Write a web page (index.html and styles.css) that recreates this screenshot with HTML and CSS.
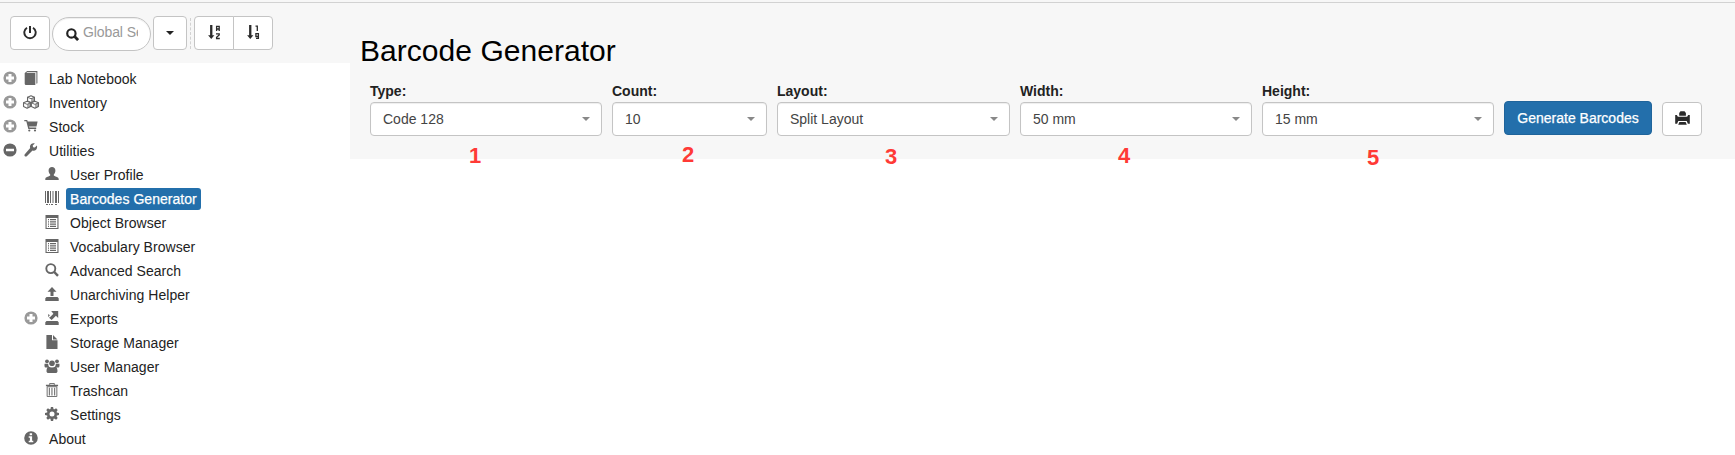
FILE: index.html
```html
<!DOCTYPE html>
<html lang="en">
<head>
<meta charset="utf-8">
<title>Barcode Generator</title>
<link rel="stylesheet" href="styles.css">
</head>
<body>
<svg class="sprite" aria-hidden="true">
  <symbol id="plus" viewBox="0 0 14 14"><path fill-rule="evenodd" d="M7 .4a6.6 6.6 0 1 0 0 13.2A6.6 6.6 0 0 0 7 .4zM5.500 3h3v2.500H11v3H8.500V11H5.500V8.500H3V5.500h2.500z"/></symbol>
  <symbol id="minus" viewBox="0 0 14 14"><path fill-rule="evenodd" d="M7 .4a6.6 6.6 0 1 0 0 13.2A6.6 6.6 0 0 0 7 .4zM3 5.700h8v2.600H3z"/></symbol>
  <symbol id="book" viewBox="0 0 14 14"><path d="M3.200 0H13.400V12.300l-1 .5V1.300H3.200L2.300 2H11.300V14H2a1.300 1.300 0 0 1-1.300-1.300V2z"/></symbol>
  <symbol id="cubes" viewBox="0 0 18 15"><g fill="#fff" stroke="#666" stroke-width="1.200" stroke-linejoin="round"><path d="M9 .8l3.700 1.600v4L9 8 5.300 6.400v-4z"/><path d="M4.800 6.800l3.800 1.600v4l-3.800 1.800L1 12.400v-4z"/><path d="M13.200 6.800L17 8.400v4l-3.800 1.800-3.800-1.800v-4z"/></g><path d="M9 4l3.700-1.600v4L9 8zM4.800 10l3.800-1.600v4l-3.800 1.800zM13.200 10L17 8.400v4l-3.800 1.800z" opacity=".55"/><path d="M5.300 2.400L9 4l3.700-1.600M1 8.400L4.800 10l3.800-1.600M9.400 8.400l3.800 1.600L17 8.400" fill="none" stroke="#666"/></symbol>
  <symbol id="cart" viewBox="0 0 14 14"><path d="M.3 1h2.900l.5 1.600h9.900L12.500 7.400H5.100l.3 1.200h6.800V10H4.300L2.300 2.300H.3z"/><circle cx="5.300" cy="11.500" r="1.100"/><circle cx="11" cy="11.500" r="1.100"/></symbol>
  <symbol id="wrench" viewBox="0 0 14 14"><path d="M12.900 2.600l-2.100 2-1.700-.3-.4-1.700L10.800.5C8.800-.3 6.300 1 6 3.200c-.1.700 0 1.200.2 1.800L.8 11.300c-1.200 1.500.7 3.100 2 1.900L8.500 7.500c2.800 1 5.400-1.800 4.400-4.900z"/></symbol>
  <symbol id="user" viewBox="0 0 14 14"><path d="M7 0c2 0 3.400 1.300 3.400 3.400 0 1.600-.7 3.300-1.600 4.100v1.100c.5.700 4.900 1.500 4.900 3.300V13H.3v-1.100c0-1.800 4.400-2.600 4.900-3.300V7.500C4.300 6.700 3.600 5 3.600 3.400 3.600 1.300 5 0 7 0z"/></symbol>
  <symbol id="barcode" viewBox="0 0 14 14"><path d="M0 0h1v12H0zM2 0h2v12H2zM5 0h1v12H5zM7.500 0h1v12h-1zM10 0h2v12h-2zM13 0h1v12h-1zM1 13h2v1H1zM4 13h1v1H4zM6 13h2v1H6zM10 13h2v1h-2z"/></symbol>
  <symbol id="list" viewBox="0 0 14 14"><path fill-rule="evenodd" d="M.5 0h13v14H.5zM1.600 3v9.900h10.800V3z"/><path d="M3 4h1v1.200H3zM5 4h6v1.200H5zM3 6.300h1v1.200H3zM5 6.300h6v1.200H5zM3 8.500h1v1.200H3zM5 8.500h6v1.200H5zM3 10.700h1v1.200H3zM5 10.700h6v1.200H5z"/></symbol>
  <symbol id="search" viewBox="0 0 14 14"><g fill="none" stroke="currentColor"><circle cx="5.800" cy="5.600" r="4.500" stroke-width="1.900"/><path d="M9.200 9l3.800 3.900" stroke-width="2.500"/></g></symbol>
  <symbol id="search-bold" viewBox="0 0 14 14"><g fill="none" stroke="currentColor"><circle cx="5.800" cy="5.800" r="4.500" stroke-width="2.300"/><path d="M9 9l4 4" stroke-width="3"/></g></symbol>
  <symbol id="upload" viewBox="0 0 14 14"><path d="M7 0l4.500 4.700H8.500V9h-3V4.700h-3zM1.500 10h11l1.200 1.300V14H.3v-2.700z"/></symbol>
  <symbol id="export" viewBox="0 0 14 14"><path d="M6.200 0h7v7l-2.300-2.300L8 7.700 6.600 9 4 6.700l1.700-1.100 2.700-2.800zM1.500 10h11l1.200 1.300V14H.3v-2.700zM3.300 3l1.600 1.300-1.800 1.900z"/></symbol>
  <symbol id="file" viewBox="0 0 14 14"><path d="M1.400 0H7v5.300h5.500V14H1.400zM8 0l4.500 4.400H8z"/></symbol>
  <symbol id="users" viewBox="0 0 16 14"><circle cx="3" cy="2.300" r="1.900"/><circle cx="13" cy="2.300" r="1.900"/><circle cx="8" cy="4.300" r="2.800"/><path d="M.6 4.700h3.600A4.500 4.500 0 0 0 5 7.600L3 8.500H1.500C.5 8.500.3 6 .6 4.700zM11.800 4.700h3.600c.3 1.300.1 3.800-.9 3.800H13l-2-.9c.6-.8.9-1.700.8-2.900zM4.500 7.500c2 1.200 5 1.200 7 0 1.500.6 2 3 2 4.700 0 1.200-.8 1.800-1.900 1.800H4.400c-1.100 0-1.900-.6-1.900-1.800 0-1.700.5-4.100 2-4.700z"/></symbol>
  <symbol id="trash" viewBox="0 0 14 15"><path d="M4.500 2V.5h5V2M1.800 4h10.400v10.500H1.800z" fill="none" stroke="currentColor"/><path d="M.5 2h13v1.500H.5zM3.600 5h1.100v8.500H3.600zM6.400 5h1.100v8.500H6.400zM9.300 5h1.100v8.500H9.300z"/></symbol>
  <symbol id="gear" viewBox="0 0 14 14"><circle cx="7" cy="7" r="3.700" fill="none" stroke="currentColor" stroke-width="2.400"/><path d="M5.900 0h2.200l.6 3H5.300zM5.300 11h3.400l-.6 3H5.900zM0 5.900l3-.6v3.400l-3-.6zM11 5.300l3 .6v2.200l-3 .6zM1.300 2.900l1.600-1.600 2.300 1.500-2.400 2.400zM8.800 2.800l2.300-1.500 1.600 1.600-1.500 2.300zM2.800 8.800l2.400 2.400-2.300 1.500-1.600-1.600zM11.200 8.800l1.500 2.300-1.600 1.600-2.300-1.500z"/></symbol>
  <symbol id="info" viewBox="0 0 14 14"><path fill-rule="evenodd" d="M7 .2a6.800 6.800 0 1 0 0 13.600A6.800 6.800 0 0 0 7 .2zM5.700 2.300h2.400v1.900H5.700zM4.700 5.300h3.400v4.400h1.200v1.500H4.700V9.700h1.200V6.800H4.700z"/></symbol>
  <symbol id="power" viewBox="0 0 14 14"><path d="M4 1.700a5.700 5.700 0 1 0 6 0" fill="none" stroke="currentColor" stroke-width="1.900"/><path d="M6 0h2v7H6z"/></symbol>
  <symbol id="sort-alpha" viewBox="0 0 13 15"><path d="M2.100 0h2.300v10.300h2L3.250 14 .1 10.300h2z"/><g fill="none" stroke="currentColor" stroke-width="1.300"><path d="M8.600 6V1.300h2.600V6M8.600 4h2.600M8 8.900h3.200v1L8.600 12.300v1.200h3.200"/></g></symbol>
  <symbol id="sort-order" viewBox="0 0 13 15"><path d="M2.100 0h2.300v10.300h2L3.250 14 .1 10.300h2z"/><g fill="none" stroke="currentColor" stroke-width="1.300"><path d="M8.500 1.100h1.800V6M11.400 11.500H8.900V8.700h2.500v4.700H9"/></g></symbol>
  <symbol id="print" viewBox="0 0 15 14"><path d="M4.200 4.700V2L5.500.3h4L10.900 2v2.700zM.2 4h1.600l1.100 1.700h9.200L13.200 4h1.600v8.700h-1.900l-1.200-2.800H3.300l-1.200 2.800H.2zM4.400 11h6.200l1.200 2.700H3.200z"/></symbol>
</svg>

<header class="topline"></header>
<div class="app">
  <aside class="sidebar">
    <div class="toolbar">
      <button class="btn power"><svg><use href="#power"/></svg></button>
      <div class="search"><svg><use href="#search-bold"/></svg><span>Global Search</span></div>
      <button class="btn dropdown"><i class="caret"></i></button>
      <i class="separator"></i>
      <div class="group">
        <button class="btn"><svg><use href="#sort-alpha"/></svg></button>
        <button class="btn"><svg><use href="#sort-order"/></svg></button>
      </div>
    </div>
    <ul class="tree">
      <li><svg class="toggle"><use href="#plus"/></svg><svg class="icon"><use href="#book"/></svg><span>Lab Notebook</span></li>
      <li><svg class="toggle"><use href="#plus"/></svg><svg class="icon wide"><use href="#cubes"/></svg><span>Inventory</span></li>
      <li><svg class="toggle"><use href="#plus"/></svg><svg class="icon"><use href="#cart"/></svg><span>Stock</span></li>
      <li><svg class="toggle open"><use href="#minus"/></svg><svg class="icon"><use href="#wrench"/></svg><span>Utilities</span></li>
      <li class="child"><i class="toggle"></i><svg class="icon"><use href="#user"/></svg><span>User Profile</span></li>
      <li class="child"><i class="toggle"></i><svg class="icon"><use href="#barcode"/></svg><span class="active">Barcodes Generator</span></li>
      <li class="child"><i class="toggle"></i><svg class="icon"><use href="#list"/></svg><span>Object Browser</span></li>
      <li class="child"><i class="toggle"></i><svg class="icon"><use href="#list"/></svg><span>Vocabulary Browser</span></li>
      <li class="child"><i class="toggle"></i><svg class="icon"><use href="#search"/></svg><span>Advanced Search</span></li>
      <li class="child"><i class="toggle"></i><svg class="icon"><use href="#upload"/></svg><span>Unarchiving Helper</span></li>
      <li class="child"><svg class="toggle"><use href="#plus"/></svg><svg class="icon"><use href="#export"/></svg><span>Exports</span></li>
      <li class="child"><i class="toggle"></i><svg class="icon"><use href="#file"/></svg><span>Storage Manager</span></li>
      <li class="child"><i class="toggle"></i><svg class="icon wide"><use href="#users"/></svg><span>User Manager</span></li>
      <li class="child"><i class="toggle"></i><svg class="icon"><use href="#trash"/></svg><span>Trashcan</span></li>
      <li class="child"><i class="toggle"></i><svg class="icon"><use href="#gear"/></svg><span>Settings</span></li>
      <li><i class="toggle"></i><svg class="icon"><use href="#info"/></svg><span>About</span></li>
    </ul>
  </aside>
  <main class="panel">
    <h1>Barcode Generator</h1>
    <div class="form">
      <div class="field"><label>Type:</label><div class="select"><span>Code 128</span><i class="caret"></i></div><b class="mark m1">1</b></div>
      <div class="field count"><label>Count:</label><div class="select"><span>10</span><i class="caret"></i></div><b class="mark m2">2</b></div>
      <div class="field layout"><label>Layout:</label><div class="select"><span>Split Layout</span><i class="caret"></i></div><b class="mark m3">3</b></div>
      <div class="field"><label>Width:</label><div class="select"><span>50 mm</span><i class="caret"></i></div><b class="mark m4">4</b></div>
      <div class="field"><label>Height:</label><div class="select"><span>15 mm</span><i class="caret"></i></div><b class="mark m5">5</b></div>
      <button class="btn primary">Generate Barcodes</button>
      <button class="btn print"><svg><use href="#print"/></svg></button>
    </div>
  </main>
</div>
</body>
</html>
```

FILE: styles.css
```css
* { box-sizing: border-box; }
body { margin: 0; background: #fff; color: #222; font: 14px/20px "Liberation Sans", Arial, sans-serif; overflow: hidden; }
svg { fill: currentColor; flex: none; display: block; }
.sprite { position: absolute; width: 0; height: 0; }
.topline { height: 3px; background: #f7f7f7; border-bottom: 1px solid #d2d2d2; }
.app { display: flex; align-items: flex-start; }
.sidebar { width: 350px; }
.toolbar { display: flex; height: 60px; padding: 13px 0 0 10px; background: #f7f7f7; }
.btn { display: flex; align-items: center; justify-content: center; width: 40px; height: 34px; padding: 0; border: 1px solid #c4c4c4; border-radius: 4px; background: #fff; color: #2b2b2b; font: inherit; }
.power svg { width: 14px; height: 14px; margin-bottom: 1px; }
.search { display: flex; align-items: center; width: 99px; height: 34px; margin: 1px 2px 0; padding-left: 13px; border: 1px solid #c4c4c4; border-radius: 17px; background: #fff; box-shadow: inset 0 1px 1px rgba(0,0,0,.07); color: #999; }
.search svg { width: 13px; height: 13px; margin-right: 4px; color: #222; }
.search span { width: 55px; height: 20px; margin-top: -4px; overflow: hidden; white-space: nowrap; letter-spacing: -.1px; }
.dropdown { width: 34px; }
.caret { width: 0; height: 0; border: 4px solid transparent; border-top-color: #222; border-bottom: 0; }
.separator { width: 1px; height: 31px; margin: 2px 3px 0; border-left: 1px dashed #d2d2d2; }
.group { display: flex; }
.group .btn:first-child { border-radius: 4px 0 0 4px; }
.group .btn:last-child { margin-left: -1px; border-radius: 0 4px 4px 0; }
.group svg { width: 13px; height: 15px; margin-bottom: 1px; }
.tree { margin: 4px 0 0; padding: 0; list-style: none; letter-spacing: .04px; }
.tree li { display: flex; align-items: center; height: 24px; padding-left: 3px; }
.tree .child { padding-left: 24px; }
.tree .toggle { width: 14px; height: 14px; margin: 0 7px 2px 0; color: #999; }
.tree .toggle.open { color: #666; }
.tree .icon { width: 14px; height: 14px; margin-bottom: 2px; color: #666; }
.tree .icon.wide { width: 18px; margin: 0 -2px 2px; }
.tree span { height: 22px; margin-left: 7px; padding: 0 4px; line-height: 23px; border-radius: 3px; }
.tree .active { background: #236fab; color: #fff; -webkit-text-stroke: .25px #fff; }
.panel { flex: 1; height: 156px; padding: 31px 0 0 10px; background: #f7f7f7; }
h1 { margin: 0; color: #000; font-size: 30px; font-weight: 400; line-height: 34px; letter-spacing: .04px; }
.form { display: flex; gap: 10px; padding: 13px 0 0 10px; }
.field { position: relative; width: 232px; }
.field.count { width: 155px; }
.field.layout { width: 233px; }
label { display: block; height: 18px; font-weight: 700; line-height: 20px; }
.select { display: flex; align-items: center; justify-content: space-between; height: 34px; margin-top: 3px; padding: 0 11px 0 12px; border: 1px solid #c4c4c4; border-radius: 4px; background: #fff; box-shadow: inset 0 1px 1px rgba(0,0,0,.07); color: #444; }
.select .caret { border-top-color: #888; }
.primary { width: 148px; margin-top: 20px; border-color: #1f649b; background: #236fab; color: #fff; -webkit-text-stroke: .25px #fff; }
.print { margin-top: 21px; }
.print svg { width: 15px; height: 14px; margin-bottom: 2px; }
.mark { position: absolute; top: 62px; color: #ff3a36; font-size: 22px; line-height: 26px; }
.m1 { left: 99px; }
.m2 { left: 70px; top: 61px; }
.m3 { left: 108px; top: 63px; }
.m4 { left: 98px; }
.m5 { left: 105px; top: 64px; }
```
